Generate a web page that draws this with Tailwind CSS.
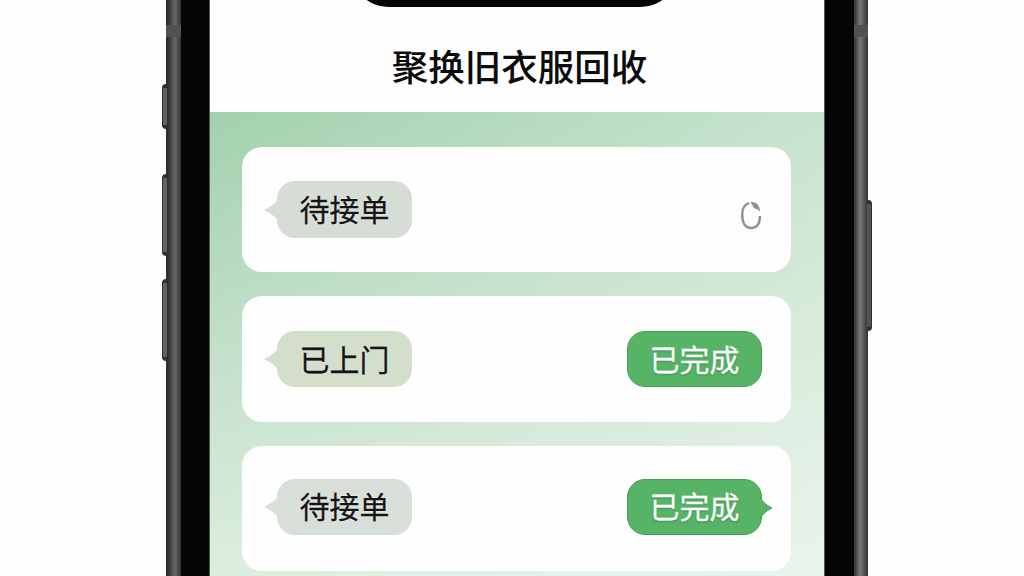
<!DOCTYPE html>
<html lang="zh-CN">
<head>
    <meta charset="UTF-8">
    <meta name="viewport" content="width=device-width, initial-scale=1.0">
    <title>聚换旧衣服回收</title>
    <script src="https://cdn.jsdelivr.net/npm/@tailwindcss/browser@4"></script>
</head>
<body class="bg-[#fefefe] overflow-hidden font-['Noto_Sans_CJK_SC',sans-serif]">
    <div class="relative w-[702px] h-[576px] ml-[166px] flex">
        <!-- Side buttons -->
        <div class="absolute -left-1 top-[84px] w-[5px] h-[45px] rounded-l-sm bg-[#626262] border-y-4 border-l border-[#2f2f2f]"></div>
        <div class="absolute -left-1 top-[174px] w-[5px] h-[82px] rounded-l-sm bg-[#626262] border-y-4 border-l border-[#333]"></div>
        <div class="absolute -left-1 top-[279px] w-[5px] h-[82px] rounded-l-sm bg-[#626262] border-y-4 border-l border-[#333]"></div>
        <div class="absolute -right-1 top-[200px] w-[5px] h-[131px] rounded-r-sm bg-[#55514f] border-y-4 border-r border-[#2f2f2f]"></div>

        <!-- Left frame -->
        <div class="w-[15px] shrink-0 pt-[25px] bg-linear-to-r from-[#2e2e2e] via-[#66676a] to-[#333] from-10% via-60%">
            <div class="h-3 bg-[#515153]"></div>
        </div>
        <div class="w-[29px] shrink-0 bg-[#040404] border-r border-[#4c5a4e]"></div>

        <!-- Screen -->
        <div class="relative w-[614px] shrink-0 flex flex-col bg-[#fcfdfc]">
            <div class="absolute left-[142px] -top-10 w-[325px] h-[47px] rounded-b-[36px] bg-[#050505]"></div>
            <header class="h-[112px] shrink-0 pt-[21px] pl-[5px] flex items-center justify-center">
                <h1 class="text-[36.5px] leading-none font-medium text-[#0c0c0c]">聚换旧衣服回收</h1>
            </header>

            <main class="relative flex-1 flex flex-col gap-6 pt-[35px] pl-8 pr-[33px] bg-linear-to-b from-[#a2d1ae] via-[#c2dfc8] to-[#dceee0]">
                <div class="absolute inset-0 bg-linear-to-r from-white/0 to-white/40"></div>

                <section class="relative h-[125px] shrink-0 rounded-[20px] bg-[#fefefe] pl-[35px] pr-[29px] flex items-center justify-between">
                    <div class="relative w-[135px] h-[57px] rounded-[18px] bg-[#d5ddd5] flex items-center justify-center">
                        <svg class="absolute -left-[13px] top-[17px]" width="15" height="24" viewBox="0 0 15 24" fill="#d5ddd5"><path d="M15 0Q12 6 0 12Q12 18 15 24Z"/></svg>
                        <span class="pb-1 text-[30px] leading-none text-[#151515] text-shadow-[0_0_2px_#fff] [-webkit-text-stroke:0.3px_#151515]">待接单</span>
                    </div>
                    <svg class="mt-3" width="22" height="30" viewBox="0 0 22 30" fill="none" stroke="#8f908f" stroke-width="2.4">
                        <path d="M9 2.2C4.500 3.500 2.200 8 2.200 14C2.200 22 5.500 27 11 27C17 27 20 23 19.800 15"/>
                        <path d="M10.500 1.200C16 0 20 4.500 20 10.500L17 8L14.500 7.500Z" fill="#8f908f" stroke="none"/>
                    </svg>
                </section>

                <section class="relative h-[126px] shrink-0 rounded-[20px] bg-[#fefefe] pl-[35px] pr-[29px] flex items-center justify-between">
                    <div class="relative w-[135px] h-[56px] rounded-[18px] bg-[#d3dfca] flex items-center justify-center">
                        <svg class="absolute -left-[13px] top-[16px]" width="15" height="24" viewBox="0 0 15 24" fill="#d3dfca"><path d="M15 0Q12 6 0 12Q12 18 15 24Z"/></svg>
                        <span class="pb-[3px] text-[30px] leading-none text-[#151515] text-shadow-[0_0_2px_#fff] [-webkit-text-stroke:0.3px_#151515]">已上门</span>
                    </div>
                    <div class="w-[135px] h-[56px] rounded-[18px] bg-[#57b466] border border-[#489d56] flex items-center justify-center">
                        <span class="pb-[3px] text-[30px] leading-none text-white text-shadow-[0_1px_2px_#318344] [-webkit-text-stroke:0.3px_#fff]">已完成</span>
                    </div>
                </section>

                <section class="relative h-[125px] shrink-0 rounded-[20px] bg-[#fefefe] pl-[35px] pr-[29px] pb-1 flex items-center justify-between">
                    <div class="relative w-[135px] h-[56px] rounded-[18px] bg-[#d8dfd9] flex items-center justify-center">
                        <svg class="absolute -left-[13px] top-[16px]" width="15" height="24" viewBox="0 0 15 24" fill="#d8dfd9"><path d="M15 0Q12 6 0 12Q12 18 15 24Z"/></svg>
                        <span class="pb-[3px] text-[30px] leading-none text-[#151515] text-shadow-[0_0_2px_#fff] [-webkit-text-stroke:0.3px_#151515]">待接单</span>
                    </div>
                    <div class="relative w-[135px] h-[56px] rounded-[18px] bg-[#57b466] border border-[#489d56] flex items-center justify-center">
                        <svg class="absolute -right-[12px] top-[17px]" width="14" height="22" viewBox="0 0 14 22" fill="#57b466"><path d="M0 0H1.500Q3 6 13 11Q3 16 1.500 22H0Z"/><path d="M1.500 0Q3 6 13 11Q3 16 1.500 22" fill="none" stroke="#489d56"/></svg>
                        <span class="pb-[3px] text-[30px] leading-none text-white text-shadow-[0_1px_2px_#318344] [-webkit-text-stroke:0.3px_#fff]">已完成</span>
                    </div>
                </section>
            </main>
        </div>

        <!-- Right frame -->
        <div class="w-[30px] shrink-0 bg-[#040404] border-l border-[#4c5a4e]"></div>
        <div class="w-[14px] shrink-0 pt-[25px] bg-linear-to-r from-[#333] via-[#77787a] to-[#333] via-45%">
            <div class="h-3 bg-[#515153]"></div>
        </div>
    </div>
</body>
</html>
